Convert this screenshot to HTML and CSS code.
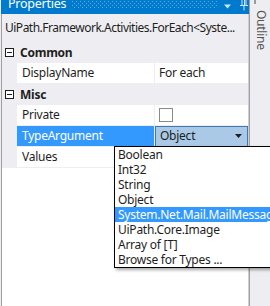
FILE: index.html
```html
<!DOCTYPE html>
<html>
<head>
<meta charset="utf-8">
<link rel="stylesheet" href="styles.css">
</head>
<body>
<div class="app">
  <div class="edge-left"></div>
  <div class="panel">
    <div class="titlebar">
      <span class="title">Properties</span>
      <svg class="grip" width="146" height="8" viewBox="0 0 146 8">
        <defs>
          <pattern id="dots" width="4" height="4" patternUnits="userSpaceOnUse">
            <rect x="0" y="0" width="1" height="1" fill="#5fb0e8"/>
            <rect x="2" y="2" width="1" height="1" fill="#5fb0e8"/>
          </pattern>
        </defs>
        <rect x="0" y="0" width="146" height="8" fill="url(#dots)"/>
      </svg>
      <svg class="tb-icon" width="10" height="10" viewBox="0 0 10 10"><path d="M1 3.5h7l-3.5 4z" fill="#d0e6f7"/></svg>
      <svg class="tb-icon pin" width="10" height="14" viewBox="0 0 10 14"><path d="M3 0.5h4v8M3 0.5v8M1 8.5h8M5 8.5v5" stroke="#d0e6f7" fill="none" stroke-width="1"/><path d="M5.5 1v7" stroke="#d0e6f7" stroke-width="1"/></svg>
    </div>
    <div class="body">
      <div class="objname">UiPath.Framework.Activities.ForEach&lt;Syste...</div>
      <div class="grid">
        <div class="cat"><span class="minus"></span><span class="cat-label">Common</span></div>
        <div class="row"><div class="gutter"></div><div class="name">DisplayName</div><div class="value">For each</div></div>
        <div class="cat"><span class="minus"></span><span class="cat-label">Misc</span></div>
        <div class="row"><div class="gutter"></div><div class="name">Private</div><div class="value"><span class="checkbox"></span></div></div>
        <div class="row"><div class="gutter"></div><div class="name selected">TypeArgument</div><div class="value"><div class="combo"><span>Object</span><svg width="8" height="5" viewBox="0 0 8 5"><path d="M0 0h7l-3.5 4z" fill="#1e1e1e"/></svg></div></div></div>
        <div class="row"><div class="gutter"></div><div class="name">Values</div><div class="value"></div></div>
      </div>
    </div>
  </div>
  <div class="sidebar">
    <div class="tabmark"></div>
    <div class="outline">Outline</div>
  </div>
</div>
<ul class="dropdown">
  <li>Boolean</li>
  <li>Int32</li>
  <li>String</li>
  <li>Object</li>
  <li class="sel">System.Net.Mail.MailMessage</li>
  <li>UiPath.Core.Image</li>
  <li>Array of [T]</li>
  <li>Browse for Types ...</li>
</ul>
</body>
</html>
```
FILE: styles.css
```css
html, body {
  margin: 0;
  padding: 0;
  background: #ffffff;
  font-family: "Noto Sans", "Open Sans", sans-serif;
  font-size: 12px;
  letter-spacing: -0.25px;
  color: #1e1e1e;
  overflow: hidden;
}
.app {
  display: flex;
  height: 320px;
  margin-top: -7px;
}
.edge-left {
  width: 3px;
  background: #eeeef2;
}
.panel {
  width: 248px;
  display: flex;
  flex-direction: column;
}
.titlebar {
  height: 21px;
  background: #007acc;
  display: flex;
  align-items: center;
  color: #ffffff;
}
.title {
  padding-left: 7px;
  font-size: 12.5px;
  line-height: 21px;
}
.grip {
  margin-left: 6px;
  margin-top: 3px;
}
.tb-icon {
  margin-left: 5px;
  margin-top: 4px;
}
.tb-icon.pin {
  margin-left: 6px;
  margin-top: 0;
}
.body {
  flex: 1;
  border-left: 1px solid #a0a0a0;
  border-right: 1px solid #cccedb;
  background: #ffffff;
}
.objname {
  background: #eeeef2;
  height: 28px;
  line-height: 27px;
  padding-left: 3px;
  white-space: nowrap;
  overflow: hidden;
  letter-spacing: -0.5px;
}
.grid {
  display: flex;
  flex-direction: column;
}
.cat {
  height: 20px;
  background: #eeeef2;
  display: flex;
  align-items: center;
  border-bottom: 1px solid #eeeef2;
}
.minus {
  width: 7px;
  height: 7px;
  border: 1px solid #1e1e1e;
  margin-left: 3px;
  position: relative;
  background: #fff;
}
.minus::after {
  content: "";
  position: absolute;
  left: 1px;
  right: 1px;
  top: 3px;
  height: 1px;
  background: #1e1e1e;
}
.cat-label {
  font-weight: bold;
  margin-left: 6px;
}
.row {
  display: flex;
  height: 20px;
  border-bottom: 1px solid #eeeef2;
}
.gutter {
  width: 15px;
  background: #eeeef2;
}
.name {
  width: 132px;
  padding-left: 5px;
  line-height: 20px;
  border-right: 1px solid #eeeef2;
}
.name.selected {
  background: #3399ff;
  color: #ffffff;
}
.value {
  flex: 1;
  padding-left: 4px;
  line-height: 20px;
  display: flex;
  align-items: center;
}
.checkbox {
  width: 12px;
  height: 12px;
  border: 1px solid #8a8a8a;
  background: #fff;
}
.combo {
  margin-left: -4px;
  flex: 1;
  background: #a9c9e6;
  border: 1px solid #3d7ab3;
  display: flex;
  align-items: center;
  justify-content: space-between;
  padding: 0 4px;
  box-sizing: border-box;
  height: 21px;
}
.sidebar {
  flex: 1;
  background: #eeeef2;
  border-left: 1px solid #a0a0a0;
  position: relative;
}
.tabmark {
  position: absolute;
  left: 4px;
  top: 4px;
  width: 2px;
  height: 7px;
  background: #9a9a9a;
}
.outline {
  writing-mode: vertical-rl;
  color: #555555;
  margin-top: 17px;
  margin-left: 3px;
  font-size: 12px;
}
.dropdown {
  position: absolute;
  left: 114px;
  top: 146px;
  width: 170px;
  margin: 0;
  padding: 0;
  list-style: none;
  background: #ffffff;
  border: 1px solid #000000;
  box-shadow: 2px 2px 3px rgba(0,0,0,0.35);
}
.dropdown li {
  height: 15px;
  line-height: 15px;
  padding-left: 3px;
  white-space: nowrap;
}
.dropdown li.sel {
  background: #3399ff;
  color: #ffffff;
}
```
